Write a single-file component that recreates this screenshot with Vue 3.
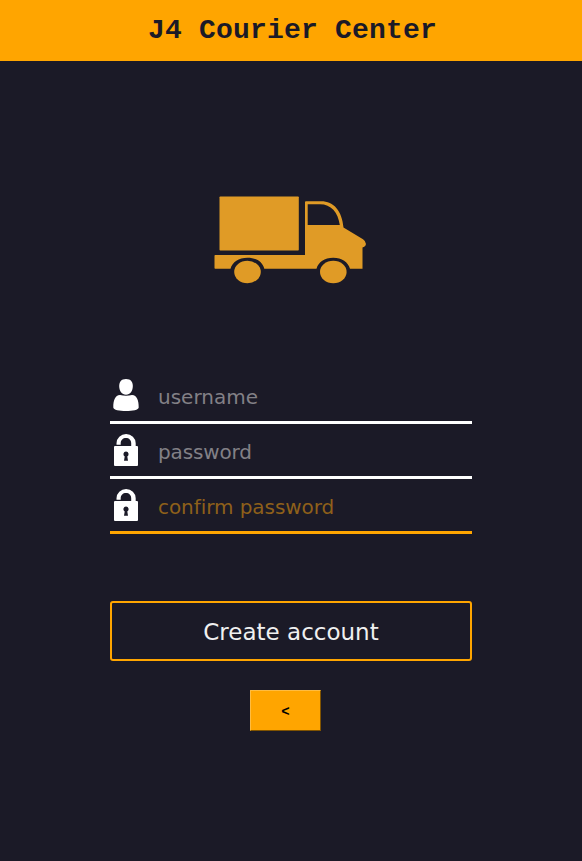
<script setup>
import { ref } from 'vue'

const fields = ref([
  { name: 'username', type: 'text', icon: 'user', active: false, value: '' },
  { name: 'password', type: 'password', icon: 'lock', active: false, value: '' },
  { name: 'confirm password', type: 'password', icon: 'lock', active: true, value: '' },
])
</script>

<template>
  <main class="page">
    <header class="header"><h1>J4 Courier Center</h1></header>

    <svg class="truck" width="154" height="90" viewBox="0 0 154 90" aria-hidden="true">
      <rect x="5.500" y="1.500" width="79.300" height="54" rx="0.8" />
      <path fill-rule="evenodd" d="M1.200 60H91V7Q91 6.300 92 6.300H107C120 6.300 128 16 129.500 32.500L149 44.200Q153 47 151.500 50.500Q150.500 52 148.500 52.500V73.700H136C134 67 128 62.700 119.200 62.700S104.500 67 102.500 73.700H50.300C48.500 67 42.500 62.700 33.500 62.700S18.500 67 16.500 73.700H1.200Q.5 73.700 .5 73V60.700Q.5 60 1.200 60ZM93.700 9.200V30H125.800C124 17 117 9.200 106 9.200Z" />
      <ellipse cx="33.500" cy="77" rx="13.300" ry="11.200" />
      <ellipse cx="119.300" cy="77" rx="13.300" ry="11.200" />
    </svg>

    <form class="form" @submit.prevent>
      <label v-for="field in fields" :key="field.name" class="field" :class="{ active: field.active }">
        <svg v-if="field.icon === 'user'" class="icon" width="32" height="34" viewBox="0 0 32 34" aria-hidden="true">
          <path d="M16 1C20.800 1 22.800 3.800 22.800 8C22.800 13 20.200 16.700 16 16.700S9.200 13 9.200 8C9.200 3.800 11.200 1 16 1Z" />
          <path d="M10 17Q16 18.600 22 17C27 17.500 28.700 22 28.700 29.500C28.700 32 22.500 33 16 33S3.300 32 3.300 29.500C3.300 22 5 17.500 10 17Z" />
        </svg>
        <svg v-else class="icon" width="32" height="34" viewBox="0 0 32 34" aria-hidden="true">
          <path d="M6.500 11.700V10.200A9.600 9.200 0 0 1 25.700 10.200V13H27Q28 13 28 14V32Q28 33 27 33H5Q4 33 4 32V14Q4 13 5 13H21.200V10.200C21.200 7 19 5 16 5S10.700 7 10.700 10.200V11.700Z" />
          <path class="keyhole" d="M16 18.500A2.700 2.700 0 0 1 17.300 23.500L18 27.800H14L14.700 23.500A2.700 2.700 0 0 1 16 18.500Z" />
        </svg>
        <input v-model="field.value" :type="field.type" :class="field.icon" :placeholder="field.name" />
      </label>
      <button class="create" type="submit">Create account</button>
    </form>

    <button class="back" type="button">&lt;</button>
  </main>
</template>

<style>
body {
  background: #1b1a27;
}
</style>

<style scoped>
.page {
  box-sizing: border-box;
  min-height: 861px;
  background: #1b1a27;
  display: flex;
  flex-direction: column;
  align-items: center;
  font-family: "DejaVu Sans", Verdana, sans-serif;
}
.header {
  width: 100%;
  height: 61px;
  background: #ffa500;
  display: flex;
  align-items: center;
  justify-content: center;
}
h1 {
  margin: 0;
  padding-left: 3px;
  font: bold 28px/32px "Courier New", "Liberation Mono", monospace;
  letter-spacing: 0.2px;
  color: #1b1a27;
}
.truck {
  display: block;
  margin-top: 134px;
  margin-right: 1px;
  fill: #e09b26;
}
.form {
  width: 362px;
  margin-top: 84px;
}
.field {
  box-sizing: border-box;
  height: 55px;
  display: flex;
  align-items: flex-start;
  padding-top: 9px;
  border-bottom: 3px solid #fff;
}
.field.active {
  border-color: #ffa500;
}
.icon {
  flex: none;
  fill: #fff;
}
.keyhole {
  fill: #1b1a27;
}
input {
  min-width: 0;
  flex: 1;
  height: 38px;
  margin-left: 16px;
  padding: 0;
  border: 0;
  outline: 0;
  background: none;
  color: #fff;
  font: 20px "DejaVu Sans", Verdana, sans-serif;
  font-variant-ligatures: none;
}
input.lock {
  letter-spacing: -0.15px;
}
.active input.lock {
  letter-spacing: -0.06px;
}
input::placeholder {
  color: #828086;
  opacity: 1;
}
.active input::placeholder {
  color: #8e601a;
}
button {
  display: block;
  padding: 0;
}
.create {
  width: 362px;
  height: 60px;
  margin-top: 67px;
  padding-top: 2px;
  border: 2px solid #ffa500;
  border-radius: 3px;
  background: none;
  color: #f0f0f0;
  font: 23px "DejaVu Sans", Verdana, sans-serif;
}
.back {
  width: 71px;
  height: 41px;
  margin-top: 29px;
  margin-right: 11px;
  padding-top: 2px;
  border: 1px solid;
  border-color: #ffbc40 #805300 #805300 #ffbc40;
  background: #ffa500;
  color: #000;
  font: bold 14px "Courier New", "Liberation Mono", monospace;
}
</style>
